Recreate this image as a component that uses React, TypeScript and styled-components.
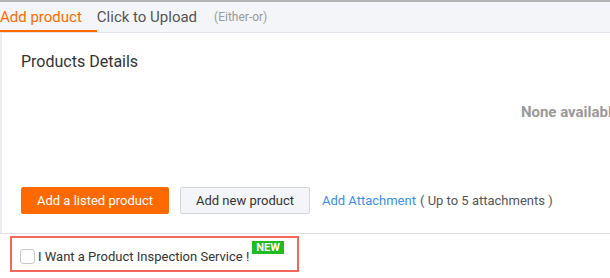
import React, { FC } from "react";
import styled, { createGlobalStyle } from "styled-components";

const GlobalStyle = createGlobalStyle`
  html, body {
    margin: 0;
    padding: 0;
    background: #fff;
    overflow: hidden;
  }
  body {
    font-family: Roboto, "Liberation Sans", Arial, sans-serif;
    color: #333;
  }
`;

const Page = styled.div`
  width: 1140px;
  border-top: 2px solid #b4b4b4;
`;

const TabBar = styled.div`
  display: flex;
  align-items: flex-end;
  height: 30px;
  background: #f4f5f8;
  border-bottom: 1px solid #e2e3e8;
`;

const Tab = styled.div<{ active?: boolean }>`
  height: 30px;
  box-sizing: border-box;
  padding: 2px 15px 0 0;
  display: flex;
  align-items: center;
  font-size: 15px;
  color: ${({ active }) => (active ? "#ff6a00" : "#555")};
  border-bottom: 2px solid ${({ active }) => (active ? "#ff6a00" : "transparent")};
`;

const TabHint = styled.span`
  height: 30px;
  display: flex;
  align-items: center;
  font-size: 12px;
  color: #9a9a9a;
  margin-left: 2px;
`;

const Panel = styled.div`
  border-left: 2px solid #ececf3;
  border-bottom: 1px solid #e3e3e6;
  padding: 17px 20px 19px 19px;
`;

const Title = styled.div`
  font-size: 16px;
  line-height: 24px;
  color: #333;
`;

const Empty = styled.div`
  height: 113px;
  box-sizing: border-box;
  padding-top: 28px;
  text-align: center;
  font-size: 15px;
  line-height: 20px;
  font-weight: 700;
  color: #999;
`;

const Actions = styled.div`
  display: flex;
  align-items: center;
  gap: 11px;
`;

const Button = styled.button<{ primary?: boolean }>`
  height: 27px;
  box-sizing: border-box;
  padding: 0 15px;
  border-radius: 2px;
  font-family: inherit;
  font-size: 13px;
  cursor: pointer;
  background: ${({ primary }) => (primary ? "#ff6a00" : "#f4f5f8")};
  color: ${({ primary }) => (primary ? "#fff" : "#333")};
  border: 1px solid ${({ primary }) => (primary ? "#ff6a00" : "#d4d6dd")};
`;

const Attach = styled.div`
  font-size: 13px;
  color: #555;
  margin-left: 1px;
  a {
    color: #3a8ee6;
    text-decoration: none;
    margin-right: 4px;
  }
`;

const Inspection = styled.label`
  display: inline-flex;
  align-items: center;
  margin: 2px 0 0 10px;
  padding: 11px 13px 6px 8px;
  border: 2px solid #f2695b;
  font-size: 13px;
  color: #333;
  cursor: pointer;
`;

const Check = styled.span`
  width: 15px;
  height: 15px;
  box-sizing: border-box;
  border: 1px solid #c8c8cc;
  border-radius: 3px;
  background: #fff;
  margin-right: 3px;
`;

const NewBadge = styled.span`
  position: relative;
  top: -9px;
  margin-left: 3px;
  padding: 0 4px;
  background: #1fbb1f;
  color: #fff;
  font-size: 11px;
  font-weight: 700;
  line-height: 13px;
`;

const App: FC = () => (
  <>
    <GlobalStyle />
    <Page>
      <TabBar>
        <Tab active>Add product</Tab>
        <Tab>Click to Upload</Tab>
        <TabHint>(Either-or)</TabHint>
      </TabBar>
      <Panel>
        <Title>Products Details</Title>
        <Empty>None available</Empty>
        <Actions>
          <Button primary>Add a listed product</Button>
          <Button>Add new product</Button>
          <Attach>
            <a href="#attach">Add Attachment</a>( Up to 5 attachments )
          </Attach>
        </Actions>
      </Panel>
      <Inspection>
        <Check />
        I Want a Product Inspection Service !
        <NewBadge>NEW</NewBadge>
      </Inspection>
    </Page>
  </>
);

export default App;
